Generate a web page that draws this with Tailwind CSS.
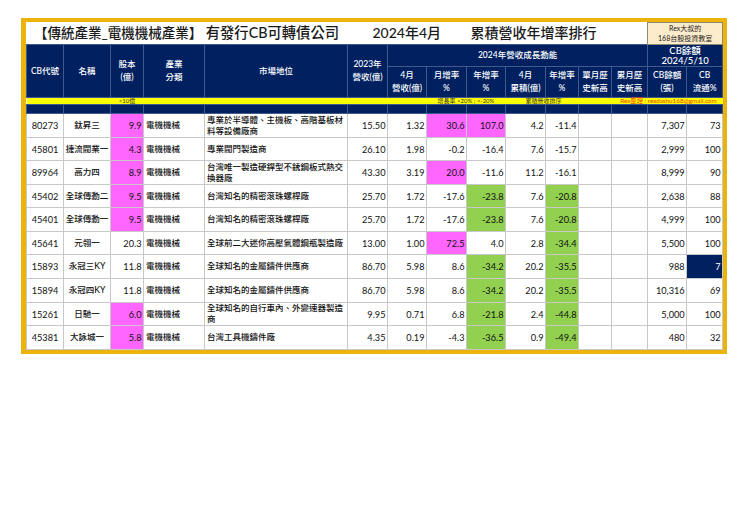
<!DOCTYPE html>
<html lang="zh-Hant">
<head>
    <meta charset="UTF-8">
    <title>電機機械產業 CB</title>
    <script src="https://cdn.jsdelivr.net/npm/@tailwindcss/browser@4"></script>
</head>
<body class="bg-white font-['Lato','Noto_Sans_CJK_TC',sans-serif]">
    <div class="ml-[21px] mt-[18px] w-[706px] border-x-[5px] border-t-[4px] border-b-[4px] border-[#ebb30c]">
        <table class="table-fixed border-collapse w-[696px] text-[9.2px] leading-[11px] text-[#111]">
            <colgroup>
                <col class="w-[37px]"><col class="w-[47px]"><col class="w-[33px]"><col class="w-[61px]"><col class="w-[143px]"><col class="w-[40px]"><col class="w-[39px]"><col class="w-[40px]"><col class="w-[39px]"><col class="w-[40px]"><col class="w-[33px]"><col class="w-[33px]"><col class="w-[36px]"><col class="w-[39px]"><col class="w-[36px]">
            </colgroup>
            <thead class="text-white text-center text-[8.5px] leading-[13px] [&_th]:font-medium [&_.n]:border [&_.n]:border-[#3f5a8c] [&_.n]:bg-[#002060]">
                <tr class="h-[22px]">
                    <td colspan="13" class="p-0 bg-white text-[#1a1a1a] text-left font-medium">
                        <div class="flex items-center h-[21px] text-[14px] leading-[14px] whitespace-nowrap">
                            <span class="w-[346px] pl-[7.5px]"><span class="text-[13.5px]">【傳統產業_電機機械產業】</span> <span class="text-[14.3px]">有發行CB可轉債公司</span></span>
                            <span class="w-[98px]">2024年4月</span>
                            <span>累積營收年增率排行</span>
                        </div>
                    </td>
                    <td colspan="2" class="p-0 border border-[#8a8a70] bg-[#fdeccb] text-[#1a1a1a] text-[7px] leading-[9.5px] text-center">Rex大叔的<br>168台股投資教室</td>
                </tr>
                <tr class="h-[22px]">
                    <th rowspan="2" class="n">CB代號</th>
                    <th rowspan="2" class="n">名稱</th>
                    <th rowspan="2" class="n">股本<br>(億)</th>
                    <th rowspan="2" class="n">產業<br>分類</th>
                    <th rowspan="2" class="n">市場地位</th>
                    <th rowspan="2" class="n">2023年<br>營收(億)</th>
                    <th colspan="7" class="n">2024年營收成長動能</th>
                    <th colspan="2" class="n text-[9.5px] leading-[10px]">CB餘額<br>2024/5/10</th>
                </tr>
                <tr class="h-[31px]">
                    <th class="n">4月<br>營收(億)</th>
                    <th class="n">月增率<br>%</th>
                    <th class="n">年增率<br>%</th>
                    <th class="n">4月<br>累積(億)</th>
                    <th class="n">年增率<br>%</th>
                    <th class="n">單月歷<br>史新高</th>
                    <th class="n">累月歷<br>史新高</th>
                    <th class="n">CB餘額<br>(張)</th>
                    <th class="n">CB<br>流通%</th>
                </tr>
                <tr class="h-[7px] bg-[#ffff00] text-[#333] text-[6px] leading-[6px]">
                    <td colspan="2"></td>
                    <td class="whitespace-nowrap">&lt;10億</td>
                    <td colspan="4"></td>
                    <td colspan="2" class="text-left pl-[11px] whitespace-nowrap">增長率 &gt;20% ; &lt;-20%</td>
                    <td colspan="3" class="text-left pl-[20px] whitespace-nowrap">累積營收排序</td>
                    <td colspan="3" class="text-right pr-[6px] text-[#e8400c] text-[6.3px] whitespace-nowrap">Rex整理 : rexdashu168@gmail.com</td>
                </tr>
                <tr class="h-[9px]">
                    <td class="n"></td><td class="n"></td><td class="n"></td><td class="n"></td><td class="n"></td><td class="n"></td><td class="n"></td><td class="n"></td><td class="n"></td><td class="n"></td><td class="n"></td><td class="n"></td><td class="n"></td><td class="n"></td><td class="n"></td>
                </tr>
            </thead>
            <tbody class="text-right [&_td]:border [&_td]:border-[#c8c8c8] [&_td]:px-[1.5px] [&_td]:py-0 [&_.c]:text-center [&_.a]:text-center [&_.a]:text-[8.5px] [&_.a]:font-medium [&_.a]:whitespace-nowrap [&_.t]:text-left [&_.t]:text-[8.5px] [&_.t]:font-medium [&_.t]:px-[2px] [&_.m]:bg-[#ff66ff] [&_.g]:bg-[#92d050]">
                <tr class="h-[24px]"><td class="c">80273</td><td class="a">鈦昇三</td><td class="m">9.9</td><td class="t">電機機械</td><td class="t">專業於半導體、主機板、高階基板材料等設備廠商</td><td>15.50</td><td>1.32</td><td class="m">30.6</td><td class="m">107.0</td><td>4.2</td><td>-11.4</td><td></td><td></td><td>7,307</td><td>73</td></tr>
                <tr class="h-[23px]"><td class="c">45801</td><td class="a">捷流閥業一</td><td class="m">4.3</td><td class="t">電機機械</td><td class="t">專業閥門製造商</td><td>26.10</td><td>1.98</td><td>-0.2</td><td>-16.4</td><td>7.6</td><td>-15.7</td><td></td><td></td><td>2,999</td><td>100</td></tr>
                <tr class="h-[24px]"><td class="c">89964</td><td class="a">高力四</td><td class="m">8.9</td><td class="t">電機機械</td><td class="t">台灣唯一製造硬銲型不銹鋼板式熱交換器廠</td><td>43.30</td><td>3.19</td><td class="m">20.0</td><td>-11.6</td><td>11.2</td><td>-16.1</td><td></td><td></td><td>8,999</td><td>90</td></tr>
                <tr class="h-[23px]"><td class="c">45402</td><td class="a">全球傳動二</td><td class="m">9.5</td><td class="t">電機機械</td><td class="t">台灣知名的精密滾珠螺桿廠</td><td>25.70</td><td>1.72</td><td>-17.6</td><td class="g">-23.8</td><td>7.6</td><td class="g">-20.8</td><td></td><td></td><td>2,638</td><td>88</td></tr>
                <tr class="h-[24px]"><td class="c">45401</td><td class="a">全球傳動一</td><td class="m">9.5</td><td class="t">電機機械</td><td class="t">台灣知名的精密滾珠螺桿廠</td><td>25.70</td><td>1.72</td><td>-17.6</td><td class="g">-23.8</td><td>7.6</td><td class="g">-20.8</td><td></td><td></td><td>4,999</td><td>100</td></tr>
                <tr class="h-[23px]"><td class="c">45641</td><td class="a">元翎一</td><td>20.3</td><td class="t">電機機械</td><td class="t">全球前二大迷你高壓氣體鋼瓶製造廠</td><td>13.00</td><td>1.00</td><td class="m">72.5</td><td>4.0</td><td>2.8</td><td class="g">-34.4</td><td></td><td></td><td>5,500</td><td>100</td></tr>
                <tr class="h-[24px]"><td class="c">15893</td><td class="a">永冠三KY</td><td>11.8</td><td class="t">電機機械</td><td class="t">全球知名的金屬鑄件供應商</td><td>86.70</td><td>5.98</td><td>8.6</td><td class="g">-34.2</td><td>20.2</td><td class="g">-35.5</td><td></td><td></td><td>988</td><td class="bg-[#002060] text-white">7</td></tr>
                <tr class="h-[24px]"><td class="c">15894</td><td class="a">永冠四KY</td><td>11.8</td><td class="t">電機機械</td><td class="t">全球知名的金屬鑄件供應商</td><td>86.70</td><td>5.98</td><td>8.6</td><td class="g">-34.2</td><td>20.2</td><td class="g">-35.5</td><td></td><td></td><td>10,316</td><td>69</td></tr>
                <tr class="h-[23px]"><td class="c">15261</td><td class="a">日馳一</td><td class="m">6.0</td><td class="t">電機機械</td><td class="t">全球知名的自行車內、外變速器製造商</td><td>9.95</td><td>0.71</td><td>6.8</td><td class="g">-21.8</td><td>2.4</td><td class="g">-44.8</td><td></td><td></td><td>5,000</td><td>100</td></tr>
                <tr class="h-[24px]"><td class="c">45381</td><td class="a">大詠城一</td><td class="m">5.8</td><td class="t">電機機械</td><td class="t">台灣工具機鑄件廠</td><td>4.35</td><td>0.19</td><td>-4.3</td><td class="g">-36.5</td><td>0.9</td><td class="g">-49.4</td><td></td><td></td><td>480</td><td>32</td></tr>
            </tbody>
        </table>
    </div>
</body>
</html>
